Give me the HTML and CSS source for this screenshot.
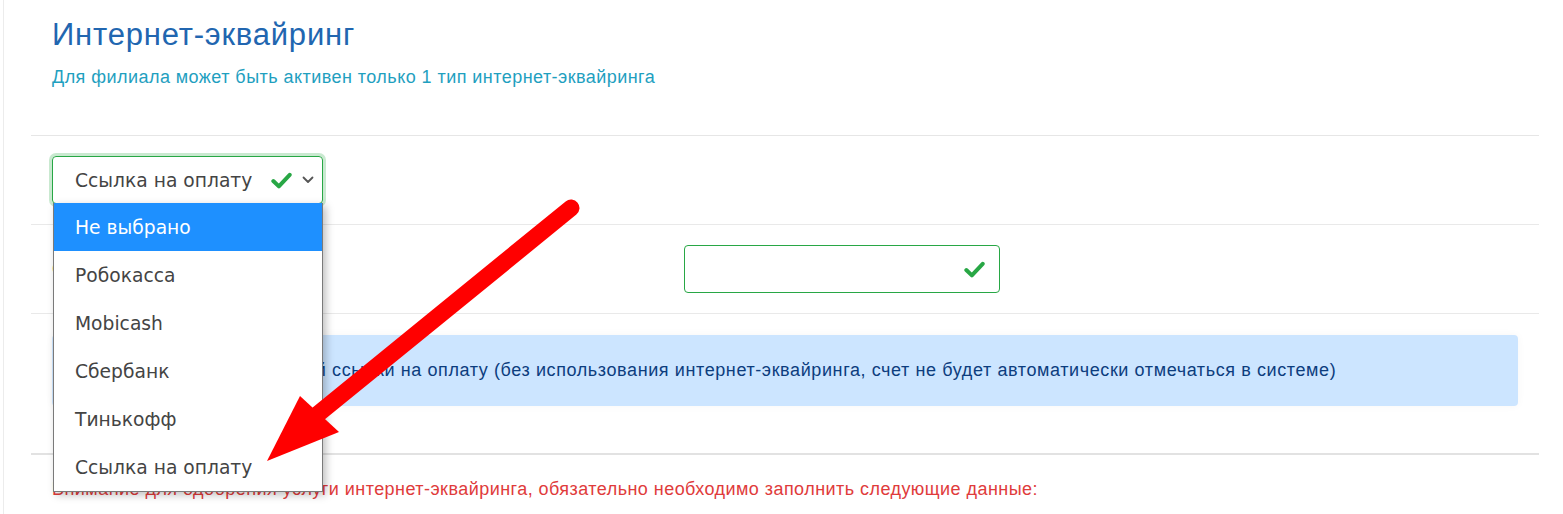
FILE: index.html
```html
<!DOCTYPE html>
<html lang="ru">
<head>
<meta charset="utf-8">
<title>Интернет-эквайринг</title>
<link rel="stylesheet" href="styles.css">
</head>
<body>
<div class="page">
  <div class="head">
    <h1 class="title">Интернет-эквайринг</h1>
    <p class="subtitle">Для филиала может быть активен только 1 тип интернет-эквайринга</p>
  </div>

  <div class="row row-select">
    <div class="select-wrap">
      <div class="select">
        <span class="select-text">Ссылка на оплату</span>
        <svg class="check" viewBox="0 0 20 16" width="21" height="17"><path d="M2.2 8.5 L7.5 13.6 L17.8 2.6" fill="none" stroke="#28a745" stroke-width="3.8" stroke-linecap="round" stroke-linejoin="round"/></svg>
        <svg class="chev" viewBox="0 0 12 8" width="12" height="8"><path d="M1.5 1.5 L6 6 L10.5 1.5" fill="none" stroke="#555" stroke-width="1.8" stroke-linecap="round" stroke-linejoin="round"/></svg>
      </div>
      <ul class="options">
        <li class="opt active">Не выбрано</li>
        <li class="opt">Робокасса</li>
        <li class="opt">Mobicash</li>
        <li class="opt">Сбербанк</li>
        <li class="opt">Тинькофф</li>
        <li class="opt">Ссылка на оплату</li>
      </ul>
    </div>
  </div>

  <div class="row row-field">
    <label class="field-label">Ссылка на оплату</label>
    <div class="input">
      <svg class="check" viewBox="0 0 20 16" width="21" height="17"><path d="M2.2 8.5 L7.5 13.6 L17.8 2.6" fill="none" stroke="#28a745" stroke-width="3.8" stroke-linecap="round" stroke-linejoin="round"/></svg>
    </div>
  </div>

  <div class="row row-alert">
    <div class="alert">Использование собственной ссылки на оплату (без использования интернет-эквайринга, счет не будет автоматически отмечаться в системе)</div>
  </div>

  <div class="row-warn">
    <p class="warn">Внимание для одобрения услуги интернет-эквайринга, обязательно необходимо заполнить следующие данные:</p>
  </div>
</div>

<svg class="arrow" width="1563" height="514" viewBox="0 0 1563 514">
  <line x1="571" y1="208" x2="318" y2="414" stroke="#ff0000" stroke-width="17" stroke-linecap="round"/>
  <polygon points="300,396 339,432 267,461" fill="#ff0000"/>
</svg>
</body>
</html>
```

FILE: styles.css
```css
html, body {
  margin: 0;
  padding: 0;
  background: #fff;
}
body {
  position: relative;
  width: 1563px;
  height: 514px;
  overflow: hidden;
  font-family: "Liberation Sans", Arial, sans-serif;
}
.page {
  margin-left: 3px;
  border-left: 1px solid #ececec;
  padding: 0 24px 0 27px;
  height: 514px;
}
.head {
  height: 136px;
  box-sizing: border-box;
  padding: 17px 21px 0;
  border-bottom: 1px solid #e6e6e6;
}
.title {
  margin: 0;
  font-size: 31px;
  line-height: 36px;
  font-weight: normal;
  letter-spacing: 0.8px;
  color: #2166b0;
}
.subtitle {
  margin: 14px 0 0;
  font-size: 18px;
  line-height: 20px;
  letter-spacing: 0.45px;
  color: #1fa0bf;
}
.row {
  padding: 20px 21px;
  border-bottom: 1px solid #e9e9e9;
}
.row-select {
  height: 48px;
}
.select-wrap {
  position: relative;
  width: 271px;
}
.select {
  box-sizing: border-box;
  height: 48px;
  width: 271px;
  border: 1px solid #28a745;
  border-radius: 4px;
  box-shadow: 0 0 0 3px rgba(40, 167, 69, 0.25);
  display: flex;
  align-items: center;
  padding: 0 8px 0 22px;
  font-family: "DejaVu Sans", Verdana, sans-serif;
  font-size: 18.7px;
  color: #444;
}
.select-text {
  flex: 1;
}
.select .check {
  margin-right: 10px;
}
.options {
  position: absolute;
  top: 47px;
  left: 1px;
  margin: 0;
  padding: 0;
  list-style: none;
  width: 270px;
  box-sizing: border-box;
  background: #fff;
  border: 1px solid #7a7a7a;
  border-top: none;
  box-shadow: 3px 3px 8px rgba(0, 0, 0, 0.25);
  font-family: "DejaVu Sans", Verdana, sans-serif;
  font-size: 18.7px;
  color: #444;
  z-index: 5;
}
.opt {
  height: 48px;
  line-height: 49px;
  padding-left: 21px;
}
.opt.active {
  background: #1e90ff;
  color: #fff;
}
.row-field {
  display: grid;
  grid-template-columns: 632px 316px;
  align-items: center;
  height: 48px;
}
.field-label {
  font-size: 18px;
  color: #e8891a;
}
.input {
  box-sizing: border-box;
  height: 48px;
  border: 1px solid #28a745;
  border-radius: 4px;
  display: flex;
  align-items: center;
  justify-content: flex-end;
  padding-right: 14px;
}
.row-alert {
  padding: 21px 21px 47px;
  border-bottom: 2px solid #e2e2e2;
}
.alert {
  height: 71px;
  box-sizing: border-box;
  display: flex;
  align-items: center;
  padding: 0 20px;
  background: #cce5ff;
  color: #0c3d7e;
  border-radius: 4px;
  box-shadow: 0 0 8px rgba(0, 0, 0, 0.04);
  font-size: 18px;
  letter-spacing: 0.6px;
  white-space: nowrap;
}
.row-warn {
  padding: 24px 21px 0;
}
.warn {
  margin: 0;
  font-size: 18px;
  line-height: 20px;
  letter-spacing: 0.45px;
  color: #e03b3b;
}
.arrow {
  position: absolute;
  left: 0;
  top: 0;
  pointer-events: none;
  z-index: 10;
}
```
